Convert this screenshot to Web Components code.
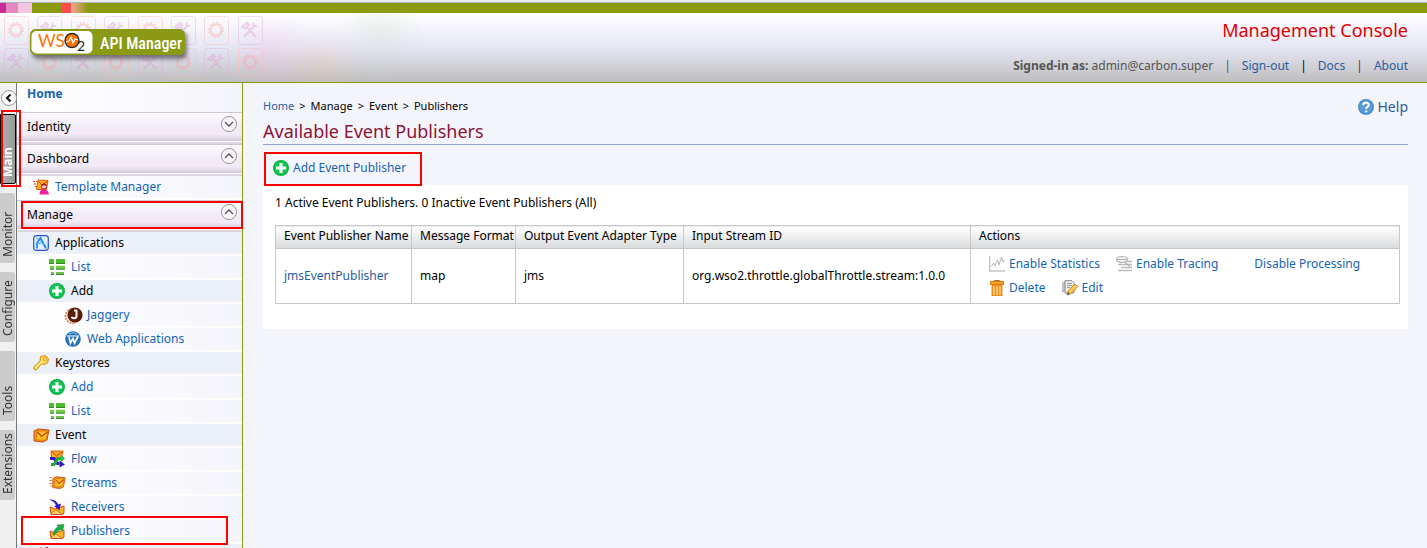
<!DOCTYPE html>
<html lang="en">
<head>
<meta charset="utf-8">
<title>WSO2 API Manager - Management Console</title>
<style>
  body {
    margin: 0;
    background: #f4f5fb;
    color: #000;
    font: 12px/16px "Noto Sans", "Open Sans", sans-serif;
  }
</style>
</head>
<body>
<carbon-console>
  <carbon-header slot="header" user="admin@carbon.super"></carbon-header>

  <carbon-tabs slot="tabs">
    <carbon-tab active>Main</carbon-tab>
    <carbon-tab>Monitor</carbon-tab>
    <carbon-tab>Configure</carbon-tab>
    <carbon-tab>Tools</carbon-tab>
    <carbon-tab>Extensions</carbon-tab>
  </carbon-tabs>

  <carbon-menu slot="menu">
    <menu-section label="Identity"></menu-section>
    <menu-section label="Dashboard" open>
      <menu-item icon="template" level="1" link label="Template Manager"></menu-item>
    </menu-section>
    <menu-section label="Manage" open marked>
      <menu-item icon="apps" level="1" label="Applications"></menu-item>
      <menu-item icon="list" level="2" link label="List"></menu-item>
      <menu-item icon="add" level="2" label="Add"></menu-item>
      <menu-item icon="jaggery" level="3" link label="Jaggery"></menu-item>
      <menu-item icon="webapp" level="3" link label="Web Applications"></menu-item>
      <menu-item icon="key" level="1" label="Keystores"></menu-item>
      <menu-item icon="add" level="2" link label="Add"></menu-item>
      <menu-item icon="list" level="2" link label="List"></menu-item>
      <menu-item icon="event" level="1" label="Event"></menu-item>
      <menu-item icon="flow" level="2" link label="Flow"></menu-item>
      <menu-item icon="streams" level="2" link label="Streams"></menu-item>
      <menu-item icon="receivers" level="2" link label="Receivers"></menu-item>
      <menu-item icon="publishers" level="2" link marked label="Publishers"></menu-item>
      <menu-item icon="next" level="1" label=""></menu-item>
    </menu-section>
  </carbon-menu>

  <publisher-page>
    <publisher-table></publisher-table>
  </publisher-page>
</carbon-console>

<script>
(function () {
  const PLUS = `<circle cx="8" cy="8" r="8" fill="#0cb04a"/><circle cx="8" cy="8" r="6.8" fill="#12c552"/><path d="M6.5 3h3v3.5H13v3H9.500V13h-3V9.500H3v-3h3.500z" fill="#fff"/>`;
  const ENVELOPE = `<path d="M1 4l4-2 11 1-2 10-4 2-9-1z" fill="#ed9b12" stroke="#cf4a1c"/><path d="M4 4h11l-2 9H3z" fill="#ffc21f" stroke="#e07a10"/><path d="M4.500 5l4 4.500L14.500 5" fill="none" stroke="#c63a16" stroke-width="1.200"/>`;
  const TRAY = `<path d="M1 8l5 2 9-3v7l-2 1.500H2z" fill="#ffb81d" stroke="#cf4a1c"/><path d="M2 14.500L6.500 11l6.500 4" fill="#ffe07a" stroke="#e07a10"/>`;

  // All glyphs are drawn on a 16x16 grid.
  const ICONS = {
    add: PLUS,
    template: `<path d="M0 2.500h4M1 5h3M2 7.500h3" stroke="#e23a1a" stroke-dasharray="2 1"/><path d="M5 1l10 .5-1.500 9H3.500z" fill="#ffb01c" stroke="#e05a14"/><path d="M5 2l4 4 6-4" fill="none" stroke="#e23a1a"/><path d="M6.500 15.500c0-4 2-5 4.500-5s4.500 1.500 5 5z" fill="#f0209c"/><circle cx="11" cy="7.500" r="2.600" fill="#f6cfc4" stroke="#a3142c"/><path d="M8.500 7c0-3 5-3 5.200 0-2-1-3-1-5.200 0z" fill="#a3142c"/>`,
    apps: `<rect x=".7" y=".7" width="14.600" height="14.600" rx="2.500" fill="#e2f0ff" stroke="#2d50c8" stroke-width="1.200"/><path d="M4 13.500V8l3.500-5L13 13.500" fill="none" stroke="#1588f5" stroke-width="1.700"/><path d="M3 2.500L13 11M3 8.500h5" fill="none" stroke="#3ba0ff"/>`,
    list: `<path d="M0 0h5v4.500H0zM7 0h9v4.500H7z" fill="#4ebb30"/><path d="M1 6.800h4v3.400H1zM7 6.800h9v3.400H7z" fill="#6fce4c"/><path d="M2 13h3v2.500H2zM7 13h8v2.500H7z" fill="#74bf58"/><path d="M0 4.500h5M7 4.500h9M1 10.200h4M7 10.200h9M2 15.500h3M7 15.500h8" stroke="#338c22"/>`,
    jaggery: `<circle cx="7.500" cy="9" r="7" fill="none" stroke="#d88a5a" stroke-width="2" stroke-dasharray="2 1"/><circle cx="10" cy="8" r="7.600" fill="#5a1d06"/><path d="M11.500 3v6c0 3-4 3-5 .8M9 3.500h3" fill="none" stroke="#fff" stroke-width="2"/>`,
    webapp: `<circle cx="8" cy="8" r="7.800" fill="#2473b4"/><path d="M2 5h12" stroke="#b7d8f0" stroke-width="1.500"/><path d="M4 6l1.500 6L8 7.500l1.500 4.500L13 5.500" fill="none" stroke="#fff" stroke-width="1.700"/><path d="M4 3l4-1.500L12 3" fill="none" stroke="#8cc0e6"/>`,
    key: `<path d="M7.500 1.500l5-1 3 3-1 4.500-3.500 1.500-2.500-.5L3 15.300.700 14v-2L7 6z" fill="#fdd24a" stroke="#d4951a"/><path d="M2 13L8.500 7l2 .5" fill="none" stroke="#fff0a0" stroke-width="1.300"/><circle cx="12" cy="4" r="1.400" fill="#fff" stroke="#d4951a"/>`,
    event: ENVELOPE,
    streams: `<g transform="translate(3 0) scale(.82 .9)">${ENVELOPE}</g><path d="M0 2.500h3M0 5.500h3M0 8.500h3M1 11h2" stroke="#f08060"/>`,
    flow: `<path d="M2 0h12l-1.500 7h-10z" fill="#ffb01c" stroke="#e05a14"/><path d="M3 1l4.500 4L13 1" fill="none" stroke="#cf301a"/><path d="M1 7.500h4l3.500 5h2" fill="none" stroke="#3a1ac0" stroke-width="3"/><path d="M2 13.500h3L9 7.500h3" fill="none" stroke="#20a83c" stroke-width="3"/><path d="M11.500 3.500l4.500 4-4.500 4z" fill="#2aba48"/><path d="M10.500 9.500l5.500 4-5.500 3z" fill="#3a1ac0"/>`,
    receivers: `${TRAY}<path d="M0 .5c5 0 8 1.500 9 5l3-1-1.500 7L5 7l2-.5C6 3.500 4 2 0 .5z" fill="#3618cc"/>`,
    publishers: `${TRAY}<path d="M4 11.500C4.500 8 6 5.500 9 4L8 2l7-.5L13.500 8 12 6.500C9 7 7 9 6 12z" fill="#20ad48" stroke="#168a38" stroke-width=".6"/>`,
    next: `<path d="M5 3l3-3 2 3z" fill="#e0209c"/><path d="M11 3l2-3h2v3z" fill="#a01860"/>`,
    help: `<circle cx="8" cy="8" r="8" fill="#4a90cf"/><circle cx="8" cy="8" r="6.200" fill="#5a9dd8"/><path d="M5.200 6.200C5.300 2.600 11 2.800 10.800 6c-.1 1.700-2.600 1.700-2.600 4M8.200 11.500v1.800" fill="none" stroke="#fff" stroke-width="2"/>`,
    stats: `<path d="M.7 0v15H16" fill="none" stroke="#c4c4c4" stroke-width="1.400"/><path d="M2.500 10l2-3 1.500 3 2.500-6 1.500 5 2.500-8 1.500 5 1.500-2" fill="none" stroke="#b4b4b4"/>`,
    tracing: `<path d="M2 8.500h14M5 11.500h11M2 14.500h14M11 5.500h5" stroke="#bbb" stroke-width="1.300"/><ellipse cx="6" cy="3.500" rx="5.500" ry="3" fill="#eee" stroke="#b4b4b4" stroke-width="1.200"/><path d="M1 3.500h10M9 6l5 5" stroke="#b4b4b4" stroke-width="1.200"/>`,
    trash: `<path d="M5.500 1.500V.5h5v1" fill="none" stroke="#b86a10"/><path d="M1.500 1.500h13v3h-13z" fill="#f5a02c" stroke="#d87a10"/><path d="M2.500 5h11v11h-11z" fill="#ef8d14"/><path d="M5 6v9M8 6v9M11 6v9" stroke="#fff0c8"/>`,
    edit: `<path d="M3 .7h7l2 2V13H3z" fill="#eee" stroke="#888"/><path d="M.7 3l2-2v10l-2 1z" fill="#ccc" stroke="#999" stroke-width=".7"/><path d="M5 3.500h5M5 5.500h5M5 7.500h3" stroke="#999"/><path d="M5 15l1.500-4.500L13 4l2.700 2.500L9 13.500z" fill="#ffc94c" stroke="#c88218"/><path d="M5 15l1-3 2 2z" fill="#555"/>`,
    down: `<circle cx="8" cy="8" r="7.600" fill="#f6f4f8" stroke="#999"/><path d="M4 6l4 4 4-4" fill="none" stroke="#555" stroke-width="1.300"/>`,
    up: `<circle cx="8" cy="8" r="7.600" fill="#f6f4f8" stroke="#999"/><path d="M4 10l4-4 4 4" fill="none" stroke="#555" stroke-width="1.300"/>`,
    left: `<circle cx="8" cy="8" r="7.500" fill="#fff" stroke="#999"/><path d="M9.500 4.500L6 8l3.500 3.500" fill="none" stroke="#111" stroke-width="2"/>`,
  };

  const LINK_STYLES = `
    a { color: #1464b4; text-decoration: none; }
    a:hover { text-decoration: underline; }
  `;

  class CarbonElement extends HTMLElement {
    constructor() {
      super();
      this.attachShadow({ mode: "open" });
    }

    connectedCallback() {
      this.shadowRoot.innerHTML = this.render();
    }
  }

  class CarbonIcon extends CarbonElement {
    render() {
      return `
        <style>
          :host { display: block; flex: none; width: 16px; height: 16px; }
          svg { display: block; width: 100%; height: 100%; overflow: visible; }
        </style>
        <svg viewBox="0 0 16 16" aria-hidden="true">${ICONS[this.getAttribute("name")] || ""}</svg>
      `;
    }
  }

  class CarbonConsole extends CarbonElement {
    render() {
      return `
        <style>
          :host { display: flex; flex-direction: column; height: 100vh; overflow: hidden; }
          .body { display: flex; flex: 1; min-height: 0; }
          main { flex: 1; min-width: 0; }
        </style>
        <slot name="header"></slot>
        <div class="body">
          <slot name="tabs"></slot>
          <slot name="menu"></slot>
          <main><slot></slot></main>
        </div>
      `;
    }
  }

  class CarbonHeader extends CarbonElement {
    // Two rows of faint tiles, gears and tools alternating.
    renderTiles() {
      const gear = `<g fill="none" stroke="#ff9c9c"><circle cx="12" cy="14" r="5.500" stroke-width="2"/><circle cx="12" cy="14" r="7.200" stroke-width="1.600" stroke-dasharray="2 1.770"/></g>`;
      const tools = `<path d="M6 21L17 9M8.500 10.500L18 21M4 11l5-4 2 2-4 3.500zM15.500 6.500V10H19" fill="none" stroke="#dc9cd4" stroke-width="2.200"/>`;
      let tiles = "";
      for (let row = 0; row < 2; row++) {
        for (let col = 0; col < 8; col++) {
          const isGear = (col + row) % 2 === 0;
          tiles += `<g transform="translate(${4 + Math.round(col * 33.4)} ${3 + row * 32})">
            <rect x=".5" y=".5" width="24" height="28" rx="2" fill="none" stroke="${isGear ? "#ffb4b4" : "#dcb0dc"}"/>
            ${isGear ? gear : tools}
          </g>`;
        }
      }
      return tiles;
    }

    render() {
      return `
        <style>
          :host { display: block; flex: none; border-top: 2px solid #ececec; }
          .strip {
            height: 10px;
            border-top: 1px solid #b4b4bc;
            background: linear-gradient(90deg,
              #cc2a96 6px, #e488c4 6px 18px, #f4c4e0 18px 32px, #8a9a12 32px 61px,
              #ff4c48 61px 71px, #f8a898 71px, #8a9a12 88px);
          }
          .bar {
            display: flex;
            justify-content: space-between;
            height: 69px;
            border-bottom: 1px solid #8a9a12;
            background:
              radial-gradient(circle at 272px 42px, #f0b4d240, transparent 44px),
              radial-gradient(circle at 322px 54px, #f0c49c40, transparent 40px),
              radial-gradient(circle at 380px 20px, #c4dcb838, transparent 44px),
              linear-gradient(#fff, #e6e6f5 50%, #bebebe);
          }
          .art { display: block; width: 280px; height: 69px; }
          .info { display: flex; flex-direction: column; justify-content: space-between; align-items: flex-end; padding: 5px 19px 8px; }
          h1 { margin: 0; color: #e00000; font-size: 18px; line-height: 24px; font-weight: 400; }
          .session { display: flex; gap: 11px; color: #555; }
          ${LINK_STYLES}
          .session a { color: #2a5c9c; }
          i { font-style: normal; color: #2a5c9c; }
          i.black { color: #000; }
          i.brown { color: #8c1a10; }
        </style>
        <div class="strip"></div>
        <div class="bar">
          <svg class="art" viewBox="0 0 280 69" role="img" aria-label="WSO2 API Manager">
            <defs>
              <filter id="shadow" x="-10%" y="-20%" width="120%" height="170%">
                <feDropShadow dx="2" dy="4" stdDeviation="2" flood-color="#444" flood-opacity=".7"/>
              </filter>
            </defs>
            <g opacity=".4">${this.renderTiles()}</g>
            <rect x="30.500" y="16.500" width="154" height="25" rx="5" fill="#8a9a12" stroke="#8a9a12" filter="url(#shadow)"/>
            <rect x="31.500" y="18" width="61" height="22.500" rx="5" fill="#fff"/>
            <text x="38" y="34" font-family="Lato, sans-serif" font-size="17" fill="#ff7300">WS</text>
            <circle cx="72" cy="27.500" r="7" fill="#ff7300" stroke="#2a2a2a" stroke-width="1.400"/>
            <path d="M66 29l3-1 2-4 2 6 2-4 3 1" fill="none" stroke="#fff" stroke-width="1.200"/>
            <text x="77" y="38" font-family="Lato, sans-serif" font-size="14" fill="#222">2</text>
            <text x="100" y="36" font-family="'Roboto Condensed', 'Liberation Sans Narrow', Roboto, sans-serif" font-size="16" font-weight="500" fill="#fff">API Manager</text>
          </svg>
          <div class="info">
            <h1>Management Console</h1>
            <div class="session">
              <span><b>Signed-in as:</b> ${this.getAttribute("user")}</span>
              <i>|</i><a href="#">Sign-out</a>
              <i class="black">|</i><a href="#">Docs</a>
              <i class="brown">|</i><a href="#">About</a>
            </div>
          </div>
        </div>
      `;
    }
  }

  class CarbonTabs extends CarbonElement {
    render() {
      return `
        <style>
          :host { display: flex; flex: none; flex-direction: column; width: 16px; background: #f0f0f0; border-right: 1px solid #777; }
          .collapse { appearance: none; display: flex; border: 0; padding: 0; margin: 7px 0 8px 1px; background: none; cursor: pointer; }
          nav { display: flex; flex-direction: column; gap: 9px; }
        </style>
        <button class="collapse" type="button" aria-label="Collapse menu"><carbon-icon name="left"></carbon-icon></button>
        <nav><slot></slot></nav>
      `;
    }
  }

  class CarbonTab extends CarbonElement {
    render() {
      return `
        <style>
          :host { display: block; position: relative; }
          button {
            appearance: none;
            display: block;
            box-sizing: border-box;
            width: 15px;
            height: 70px;
            padding: 6px 0;
            border: 0;
            border-radius: 3px 0 0 3px;
            background: #ccc;
            color: #333;
            font: inherit;
            line-height: 15px;
            text-align: left;
            white-space: nowrap;
            writing-mode: vertical-rl;
            transform: rotate(180deg);
            cursor: pointer;
          }
          :host([active]) button {
            width: 16px;
            border: 1px solid #000;
            border-radius: 2px 0 0 2px;
            background: linear-gradient(90deg, #999, #b0b0b0);
            color: #fff;
            font-weight: 700;
            line-height: 14px;
          }
          :host([active])::after {
            content: "";
            position: absolute;
            z-index: 1;
            inset: -4px -5px -3px 1px;
            border: 2px solid #f00;
            pointer-events: none;
          }
        </style>
        <button type="button"><slot></slot></button>
      `;
    }
  }

  class CarbonMenu extends CarbonElement {
    render() {
      return `
        <style>
          :host { display: block; flex: none; width: 225px; background: linear-gradient(90deg, #fff, #f4f5fb); border-right: 1px solid #8a9a12; }
          .home { display: block; padding: 3px 10px 10px; font-weight: 700; }
          ${LINK_STYLES}
        </style>
        <a class="home" href="#">Home</a>
        <slot></slot>
      `;
    }
  }

  class MenuSection extends CarbonElement {
    render() {
      const open = this.hasAttribute("open");
      return `
        <style>
          :host { display: block; position: relative; }
          button {
            appearance: none;
            display: flex;
            justify-content: space-between;
            box-sizing: border-box;
            width: 100%;
            height: 29px;
            padding: 3px 5px 0 10px;
            border: 0;
            border-top: 1px solid #cfc8d6;
            background: linear-gradient(#fbf9fd, #f2ebf6 50%, #f2ebf6 75%, #d6cadc);
            color: #000;
            font: inherit;
            cursor: pointer;
          }
          span { padding-top: 3px; }
          .rule { height: 1px; border-bottom: 1px solid #d8d2de; border-top: 1px solid #fff; background: #e4dfe8; }
          :host([marked])::after {
            content: "";
            position: absolute;
            z-index: 1;
            top: 1px;
            left: 4px;
            right: -1px;
            height: 24px;
            border: 2px solid #f00;
            pointer-events: none;
          }
        </style>
        <button type="button" aria-expanded="${open}">
          <span>${this.getAttribute("label")}</span>
          <carbon-icon name="${open ? "up" : "down"}"></carbon-icon>
        </button>
        <div class="rule"></div>
        <slot></slot>
      `;
    }
  }

  class MenuItem extends CarbonElement {
    render() {
      const label = this.getAttribute("label");
      return `
        <style>
          :host { display: block; position: relative; border-bottom: 2px solid #fff; background: #ecf0f8; }
          :host([link]) { background: none; }
          .row { display: flex; align-items: center; gap: 6px; height: 22px; padding-left: 16px; }
          :host([level="2"]) .row { padding-left: 32px; }
          :host([level="3"]) .row { padding-left: 48px; }
          :host([marked])::after {
            content: "";
            position: absolute;
            z-index: 1;
            inset: -4px 14px -3px 4px;
            border: 2px solid #f00;
            pointer-events: none;
          }
          ${LINK_STYLES}
        </style>
        <div class="row">
          <carbon-icon name="${this.getAttribute("icon")}"></carbon-icon>
          ${this.hasAttribute("link") ? `<a href="#">${label}</a>` : `<span>${label}</span>`}
        </div>
      `;
    }
  }

  class PublisherPage extends CarbonElement {
    render() {
      return `
        <style>
          :host { display: block; padding: 15px 19px 0 20px; }
          .top { display: flex; justify-content: space-between; }
          .crumbs { display: flex; gap: 5px; font-size: 11px; }
          ${LINK_STYLES}
          .crumbs a { color: #2a5c9c; }
          .help { display: flex; align-items: center; gap: 4px; height: 18px; color: #2a5c9c; font-size: 14px; }
          h2 { margin: 3px 0 7px; padding-bottom: 1px; border-bottom: 1px solid #92a8cc; color: #8c1434; font-size: 18px; line-height: 24px; font-weight: 400; }
          .add { display: flex; width: fit-content; align-items: center; gap: 4px; position: relative; padding: 8px 16px 9px 10px; }
          .add::after { content: ""; position: absolute; inset: 0 0 -1px 1px; border: 2px solid #f00; pointer-events: none; }
          .panel { padding: 10px 8px 25px 12px; background: #fff; }
          p { margin: 0 0 14px; }
        </style>
        <div class="top">
          <div class="crumbs">
            <a href="#">Home</a><span>&gt;</span>
            <span>Manage</span><span>&gt;</span>
            <span>Event</span><span>&gt;</span>
            <span>Publishers</span>
          </div>
          <a class="help" href="#"><carbon-icon name="help"></carbon-icon>Help</a>
        </div>
        <h2>Available Event Publishers</h2>
        <a class="add" href="#"><carbon-icon name="add"></carbon-icon>Add Event Publisher</a>
        <div class="panel">
          <p>1 Active Event Publishers. 0 Inactive Event Publishers (All)</p>
          <slot></slot>
        </div>
      `;
    }
  }

  class PublisherTable extends CarbonElement {
    render() {
      return `
        <style>
          :host { display: block; }
          table { width: 100%; table-layout: fixed; border-collapse: collapse; }
          th, td { border: 1px solid #c8c8c8; padding: 0 0 0 8px; text-align: left; font-weight: 400; white-space: nowrap; }
          th { height: 23px; padding-bottom: 2px; box-sizing: border-box; background: linear-gradient(#fff, #d8dadc); }
          td { height: 54px; }
          .c1 { width: 136px; }
          .c2 { width: 104px; }
          .c3 { width: 168px; }
          .c4 { width: 287px; }
          ${LINK_STYLES}
          td > a { color: #2a5c9c; }
          .actions { display: flex; gap: 16px; padding-left: 10px; }
          .actions + .actions { margin-top: 8px; }
          .actions a { display: flex; gap: 4px; }
          .actions .plain { padding-left: 20px; }
        </style>
        <table>
          <colgroup><col class="c1"><col class="c2"><col class="c3"><col class="c4"><col></colgroup>
          <thead>
            <tr>
              <th>Event Publisher Name</th>
              <th>Message Format</th>
              <th>Output Event Adapter Type</th>
              <th>Input Stream ID</th>
              <th>Actions</th>
            </tr>
          </thead>
          <tbody>
            <tr>
              <td><a href="#">jmsEventPublisher</a></td>
              <td>map</td>
              <td>jms</td>
              <td>org.wso2.throttle.globalThrottle.stream:1.0.0</td>
              <td>
                <div class="actions">
                  <a href="#"><carbon-icon name="stats"></carbon-icon>Enable Statistics</a>
                  <a href="#"><carbon-icon name="tracing"></carbon-icon>Enable Tracing</a>
                  <a class="plain" href="#">Disable Processing</a>
                </div>
                <div class="actions">
                  <a href="#"><carbon-icon name="trash"></carbon-icon>Delete</a>
                  <a href="#"><carbon-icon name="edit"></carbon-icon>Edit</a>
                </div>
              </td>
            </tr>
          </tbody>
        </table>
      `;
    }
  }

  customElements.define("carbon-icon", CarbonIcon);
  customElements.define("carbon-console", CarbonConsole);
  customElements.define("carbon-header", CarbonHeader);
  customElements.define("carbon-tabs", CarbonTabs);
  customElements.define("carbon-tab", CarbonTab);
  customElements.define("carbon-menu", CarbonMenu);
  customElements.define("menu-section", MenuSection);
  customElements.define("menu-item", MenuItem);
  customElements.define("publisher-page", PublisherPage);
  customElements.define("publisher-table", PublisherTable);
})();
</script>
</body>
</html>
